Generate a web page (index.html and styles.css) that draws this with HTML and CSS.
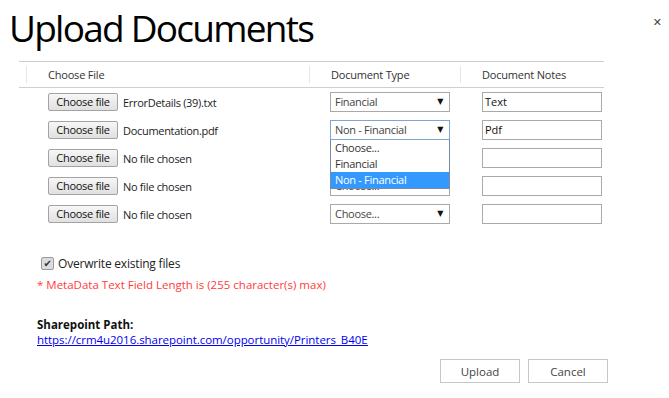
FILE: index.html
```html
<!DOCTYPE html>
<html lang="en">
<head>
    <meta charset="UTF-8">
    <meta name="viewport" content="width=device-width, initial-scale=1.0">
    <title>Upload Documents</title>
    <link rel="stylesheet" href="styles.css">
</head>
<body>

<div class="dialog">
    <button class="close-x">&#x2715;</button>
    <h1>Upload Documents</h1>

    <!-- Documents Grid -->
    <div class="doc-grid">
        <div class="head first"><span>Choose File</span></div>
        <div class="head"><span>Document Type</span></div>
        <div class="head"><span>Document Notes</span></div>

        <!-- Row 1 -->
        <div class="cell file-cell"><span class="file-btn">Choose file</span><span class="file-name">ErrorDetails (39).txt</span></div>
        <div class="cell type-cell"><div class="select">Financial<span class="arrow">&#9660;</span></div></div>
        <div class="cell note-cell"><div class="note">Text</div></div>

        <!-- Row 2 (open dropdown) -->
        <div class="cell file-cell"><span class="file-btn">Choose file</span><span class="file-name">Documentation.pdf</span></div>
        <div class="cell type-cell">
            <div class="select focused">Non - Financial<span class="arrow">&#9660;</span>
                <ul class="options">
                    <li>Choose...</li>
                    <li>Financial</li>
                    <li class="selected">Non - Financial</li>
                </ul>
            </div>
        </div>
        <div class="cell note-cell"><div class="note">Pdf</div></div>

        <!-- Row 3 -->
        <div class="cell file-cell"><span class="file-btn">Choose file</span><span class="file-name">No file chosen</span></div>
        <div class="cell type-cell"><div class="select">Choose...<span class="arrow">&#9660;</span></div></div>
        <div class="cell note-cell"><div class="note"></div></div>

        <!-- Row 4 -->
        <div class="cell file-cell"><span class="file-btn">Choose file</span><span class="file-name">No file chosen</span></div>
        <div class="cell type-cell"><div class="select">Choose...<span class="arrow">&#9660;</span></div></div>
        <div class="cell note-cell"><div class="note"></div></div>

        <!-- Row 5 -->
        <div class="cell file-cell"><span class="file-btn">Choose file</span><span class="file-name">No file chosen</span></div>
        <div class="cell type-cell"><div class="select">Choose...<span class="arrow">&#9660;</span></div></div>
        <div class="cell note-cell"><div class="note"></div></div>
    </div>

    <div class="options-area">
        <label class="overwrite"><span class="check">&#10004;</span>Overwrite existing files</label>
        <div class="warning">* MetaData Text Field Length is (255 character(s) max)</div>

        <div class="sp-label">Sharepoint Path:</div>
        <div class="sp-link"><a href="#">https://crm4u2016.sharepoint.com/opportunity/Printers_B40E0A1D</a></div>
    </div>

    <div class="actions">
        <button class="action-btn">Upload</button>
        <button class="action-btn">Cancel</button>
    </div>
</div>

</body>
</html>
```

FILE: styles.css
```css
body {
    margin: 0;
    background-color: #fff;
    color: #222;
    font-family: "Open Sans", "Noto Sans", sans-serif;
    font-size: 11px;
}

.dialog {
    position: relative;
    width: 669px;
    height: 398px;
}

.close-x {
    position: absolute;
    top: 14px;
    right: 5px;
    border: none;
    background: none;
    color: #444;
    font-size: 11px;
    padding: 2px;
    font-family: "DejaVu Sans", sans-serif;
}

h1 {
    margin: 0;
    padding: 4px 0 0 9px;
    height: 57px;
    box-sizing: border-box;
    font-size: 37px;
    font-weight: 400;
    color: #000;
    line-height: 48px;
    letter-spacing: -1.75px;
}

/* grid of upload rows */
.doc-grid {
    margin-left: 19px;
    width: 585px;
    margin-top: 4px;
    border-top: 1px solid #cfcfcf;
    display: grid;
    grid-template-columns: 290px 151px 144px;
}

.head {
    height: 25px;
    border-bottom: 1px solid #cfcfcf;
    display: flex;
    align-items: center;
    color: #333;
    letter-spacing: -0.2px;
}

.head span {
    border-left: 1px solid #e6e6e6;
    padding-left: 21px;
    line-height: 17px;
}

.head.first span {
    margin-left: 7px;
}

.cell {
    height: 28px;
    display: flex;
    align-items: center;
}

.file-cell { padding-left: 29px; }
.type-cell { padding-left: 21px; }
.note-cell { padding-left: 22px; }

.file-btn {
    display: inline-block;
    width: 70px;
    height: 18px;
    box-sizing: border-box;
    border: 1px solid #a3a3a3;
    border-radius: 2px;
    background: linear-gradient(#f7f7f7, #e0e0e0);
    text-align: center;
    line-height: 16px;
    color: #111;
    letter-spacing: -0.3px;
}

.file-name {
    margin-left: 5px;
    color: #222;
    letter-spacing: -0.3px;
}

.select {
    position: relative;
    width: 120px;
    height: 20px;
    box-sizing: border-box;
    border: 1px solid #a9a9a9;
    padding-left: 4px;
    line-height: 18px;
    color: #444;
    background: #fff;
    letter-spacing: -0.3px;
}

.select.focused {
    border-color: #7ea6d9;
}

.arrow {
    position: absolute;
    right: 6px;
    top: 0;
    font-size: 8px;
    color: #111;
    font-family: "DejaVu Sans", sans-serif;
}

.options {
    position: absolute;
    top: 19px;
    left: -1px;
    width: 120px;
    margin: 0;
    padding: 0;
    list-style: none;
    background: #fff;
    border: 1px solid #7a8ba3;
    border-top: none;
    box-sizing: border-box;
    z-index: 10;
}

.options li {
    height: 16px;
    line-height: 16px;
    padding-left: 4px;
    color: #333;
}

.options li.selected {
    background-color: #3399ff;
    color: #fff;
}

.note {
    width: 120px;
    height: 20px;
    box-sizing: border-box;
    border: 1px solid #a9a9a9;
    padding-left: 2px;
    line-height: 18px;
    color: #111;
}

/* checkbox, warning and path */
.options-area {
    padding-left: 37px;
    margin-top: 26px;
}

.overwrite {
    display: flex;
    align-items: center;
    margin-left: 4px;
    font-size: 12px;
    letter-spacing: -0.2px;
    color: #222;
    height: 18px;
}

.check {
    display: inline-block;
    width: 11px;
    height: 11px;
    border: 1px solid #9a9a9a;
    border-radius: 2px;
    background: #dcdcdc;
    color: #333;
    font-size: 10px;
    line-height: 11px;
    text-align: center;
    margin-right: 4px;
    font-family: "DejaVu Sans", sans-serif;
}

.warning {
    margin-top: 5px;
    color: #ff3b3b;
    font-size: 11.5px;
}

.sp-label {
    margin-top: 25px;
    font-weight: bold;
    font-size: 11.5px;
    color: #111;
}

.sp-link {
    width: 331px;
    overflow: hidden;
    white-space: nowrap;
    font-size: 11.5px;
    letter-spacing: -0.05px;
}

.sp-link a {
    color: #0000ee;
}

.actions {
    display: flex;
    gap: 8px;
    margin-top: 12px;
    padding-left: 440px;
}

.action-btn {
    width: 80px;
    height: 24px;
    border: 1px solid #c6c6c6;
    background: #fff;
    color: #444;
    font-family: "Open Sans", "Noto Sans", sans-serif;
    font-size: 11.5px;
}
```
